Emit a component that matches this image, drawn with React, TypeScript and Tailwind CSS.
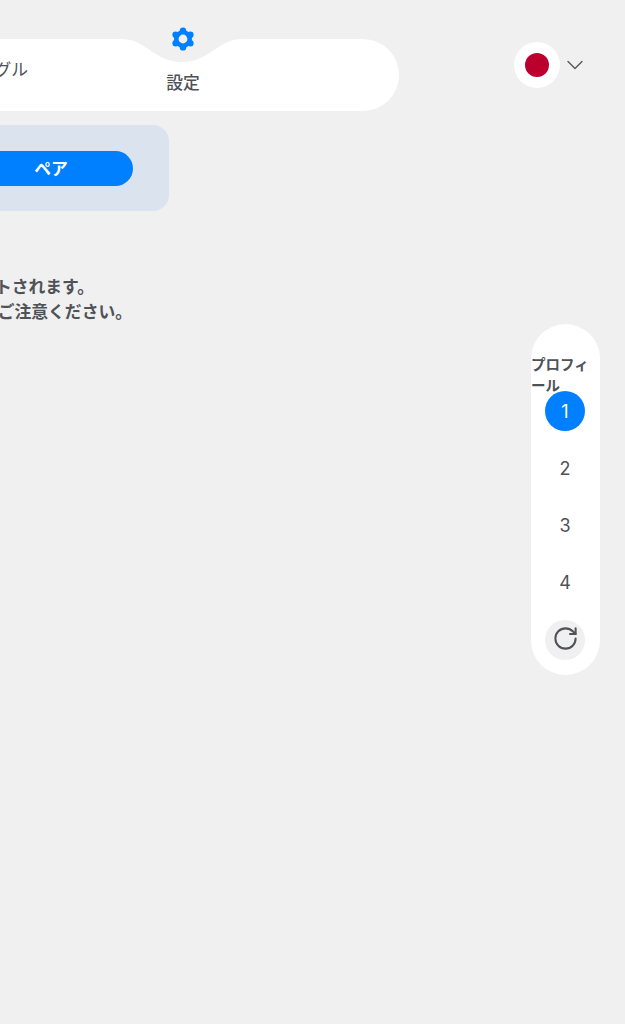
import React from 'react';
import { ChevronDown, RotateCw } from 'lucide-react';

const profiles = [1, 2, 3, 4];

function GearIcon() {
  const teeth = [
    [12, 3.6],
    [19.4, 7.8],
    [19.4, 16.2],
    [12, 20.4],
    [4.6, 16.2],
    [4.6, 7.8],
  ];
  return (
    <svg viewBox="0 0 24 24" className="w-[24px] h-[24px] block">
      <polygon points="12,3.6 19.4,7.8 19.4,16.2 12,20.4 4.6,16.2 4.6,7.8" fill="#0080ff" stroke="#0080ff" strokeWidth="3" strokeLinejoin="round" />
      {teeth.map(([cx, cy]) => (
        <circle key={`${cx}-${cy}`} cx={cx} cy={cy} r="3.2" fill="#0080ff" />
      ))}
      <circle cx="12" cy="12" r="4.4" fill="#f0f0f0" />
    </svg>
  );
}

export default function App() {
  return (
    <div className="w-[625px] h-[1024px] overflow-hidden bg-[#f0f0f0] flex flex-col font-['Inter','Noto_Sans_CJK_JP',sans-serif] text-[#4f5257]">
      {/* top nav + language */}
      <div className="flex items-start pt-[39px] shrink-0">
        <nav className="relative -ml-[201px] w-[600px] h-[72px] bg-white rounded-[36px] shrink-0 flex items-start">
          <svg viewBox="0 0 120 24" className="absolute left-[323px] top-0 w-[120px] h-[24px]">
            <path d="M0 0 C23 0 33 23 60 23 C87 23 97 0 120 0 Z" fill="#f0f0f0" />
          </svg>
          <span className="w-[229px] text-right text-[16.8px] leading-[24px] mt-[18px] whitespace-nowrap font-['Noto_Sans_CJK_JP',sans-serif]">トグル</span>
          <div className="relative ml-[125px] w-[60px] -mt-[12px] flex flex-col items-center">
            <GearIcon />
            <span className="mt-[19px] text-[16.8px] leading-[24px] font-medium whitespace-nowrap font-['Noto_Sans_CJK_JP',sans-serif]">設定</span>
          </div>
        </nav>
        <div className="ml-[115px] mt-[3px] flex items-center">
          <div className="w-[46px] h-[46px] rounded-full bg-white flex items-center justify-center">
            <div className="w-[24px] h-[24px] rounded-full bg-[#bc002d]" />
          </div>
          <ChevronDown className="ml-[1px] w-[28px] h-[28px] text-[#55585c]" strokeWidth={1.2} />
        </div>
      </div>

      {/* pair panel */}
      <div className="-ml-[200px] mt-[14px] w-[369px] h-[86px] rounded-[16px] bg-[#dbe3ee] flex items-center justify-end pr-[36px] shrink-0">
        <button className="w-[164px] h-[35px] pt-[1px] rounded-full bg-[#0080ff] text-white text-[16.8px] font-bold font-['Noto_Sans_CJK_JP',sans-serif]">
          ペア
        </button>
      </div>

      {/* reset notice */}
      <div className="mt-[63px] -ml-[200px] w-[332px] text-[16.8px] leading-[25px] font-bold whitespace-nowrap font-['Noto_Sans_CJK_JP',sans-serif] shrink-0">
        <p className="pr-[38px] text-right">リセットされます。</p>
        <p className="text-right">ご注意ください。</p>
      </div>

      {/* profile switcher */}
      <div className="self-end mr-[25px] w-[69px] h-[351px] rounded-[35px] bg-white flex flex-col items-center shrink-0 pt-[29px]">
        <div className="w-full h-[38px] text-[14.5px] leading-[21px] font-bold font-['Noto_Sans_CJK_JP',sans-serif]">プロフィール</div>
        {profiles.map((n) => (
          <div
            key={n}
            className={`w-[40px] h-[40px] mr-[1px] mb-[17.25px] rounded-full flex items-center justify-center text-[18px] ${n === 1 ? 'bg-[#0080ff] text-white' : ''}`}
          >
            {n}
          </div>
        ))}
        <div className="w-[40px] h-[40px] mr-[1px] rounded-full bg-[#f0f0f0] flex items-center justify-center">
          <RotateCw className="w-[27px] h-[27px] mb-[3px] text-[#4f5257]" strokeWidth={1.8} />
        </div>
      </div>
    </div>
  );
}
